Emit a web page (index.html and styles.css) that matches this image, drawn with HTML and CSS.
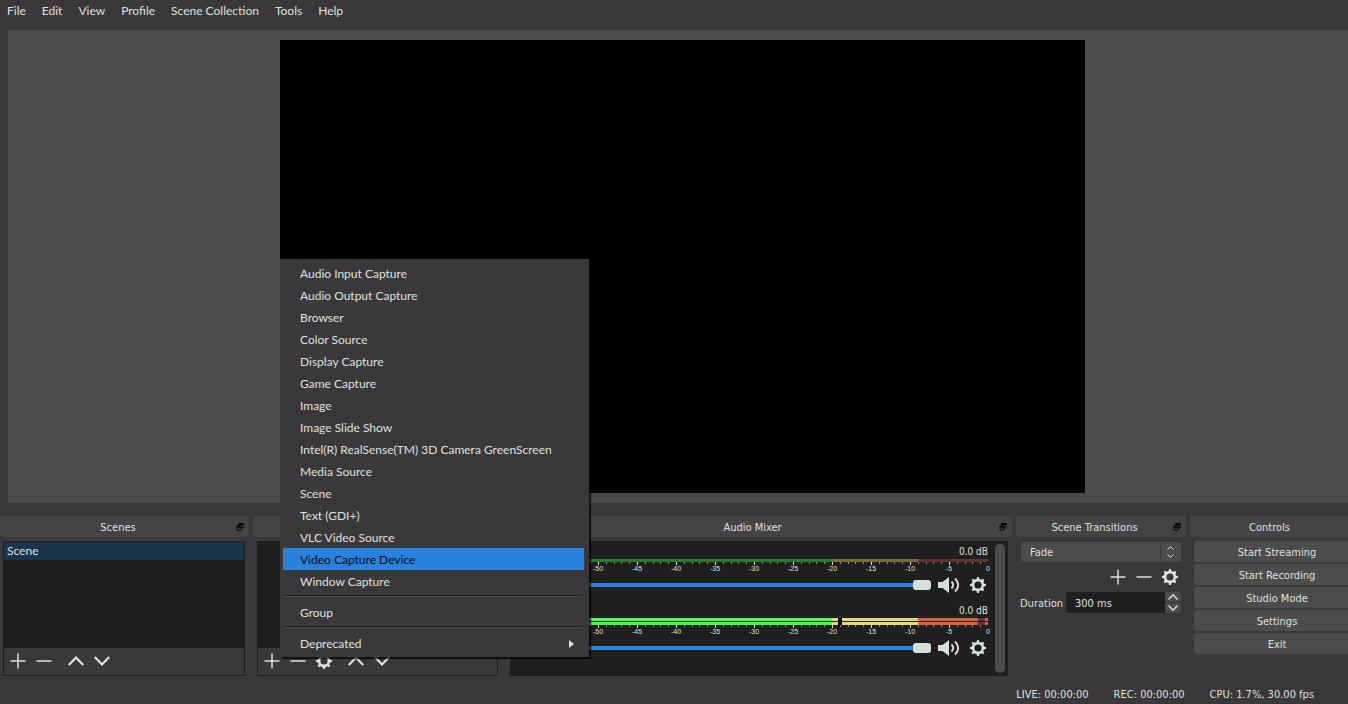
FILE: index.html
```html
<!DOCTYPE html>
<html lang="en">
<head>
<meta charset="utf-8">
<title>Studio</title>
<link rel="stylesheet" href="styles.css">
</head>
<body>
<svg class="defs" aria-hidden="true">
  <symbol id="plus" viewBox="0 0 16 16"><path d="M8 0.500V15.500M0.500 8H15.500" stroke="currentColor" stroke-width="1.500" fill="none"/></symbol>
  <symbol id="minus" viewBox="0 0 16 16"><path d="M0.500 8H15.500" stroke="currentColor" stroke-width="1.500" fill="none"/></symbol>
  <symbol id="up" viewBox="0 0 16 16"><path d="M0.800 12L8 4.500L15.200 12" stroke="currentColor" stroke-width="2.200" fill="none"/></symbol>
  <symbol id="down" viewBox="0 0 16 16"><path d="M0.800 4L8 11.500L15.200 4" stroke="currentColor" stroke-width="2.200" fill="none"/></symbol>
  <symbol id="gear" viewBox="0 0 16 16">
    <circle cx="8" cy="8" r="4.900" fill="none" stroke="currentColor" stroke-width="2.600"/>
    <path d="M6.400 2.500L7.100 0H8.900L9.600 2.500ZM6.400 13.500L7.100 16H8.900L9.600 13.500ZM2.500 6.400L0 7.100V8.900L2.500 9.600ZM13.500 6.400L16 7.100V8.900L13.500 9.600ZM2.900 5.200L1.700 2.900L2.900 1.700L5.200 2.900ZM10.800 2.900L13.100 1.700L14.300 2.900L13.100 5.200ZM2.900 10.800L1.700 13.100L2.900 14.300L5.200 13.100ZM10.800 13.100L13.100 14.300L14.300 13.100L13.100 10.800Z" fill="currentColor"/>
  </symbol>
  <symbol id="speaker" viewBox="0 0 22 16">
    <path d="M0 5H4.500L11 0V16L4.500 11H0Z" fill="currentColor"/>
    <path d="M13.500 4.500Q16.800 8 13.500 11.500M17 1.500Q23.400 8 17 14.500" stroke="currentColor" stroke-width="1.900" fill="none"/>
  </symbol>
  <symbol id="float" viewBox="0 0 8 8">
    <path d="M3 3V1H7V5H5.500M1 3.500H5V7H1Z" stroke="currentColor" fill="none"/>
    <path d="M2.500 1H7.500M0.500 3.500H5.500" stroke="currentColor" stroke-width="2"/>
  </symbol>
  <symbol id="ticks" viewBox="0 0 60 3" preserveAspectRatio="none">
    <path d="M0 1H60" stroke="#8c8c8c" stroke-width="2" stroke-dasharray="0.128 0.872"/>
    <path d="M0 1.500H60.130" stroke="#e4e4e4" stroke-width="3" stroke-dasharray="0.128 4.872"/>
  </symbol>
</svg>

<div class="app">
  <nav class="menubar">
    <button>File</button><button>Edit</button><button>View</button><button>Profile</button><button>Scene Collection</button><button>Tools</button><button>Help</button>
  </nav>

  <main class="preview"><div class="canvas"></div></main>

  <div class="docks">
    <section class="dock">
      <header class="dock-head"><h2>Scenes</h2><button class="float" aria-label="Float"><svg><use href="#float"/></svg></button></header>
      <div class="list-box">
        <ul class="list"><li class="selected">Scene</li></ul>
        <div class="toolbar">
          <button aria-label="Add"><svg><use href="#plus"/></svg></button>
          <button aria-label="Remove"><svg><use href="#minus"/></svg></button>
          <button class="apart" aria-label="Move up"><svg><use href="#up"/></svg></button>
          <button aria-label="Move down"><svg><use href="#down"/></svg></button>
        </div>
      </div>
    </section>

    <section class="dock sources">
      <header class="dock-head"></header>
      <div class="list-box">
        <ul class="list"></ul>
        <div class="toolbar">
          <button aria-label="Add"><svg><use href="#plus"/></svg></button>
          <button aria-label="Remove"><svg><use href="#minus"/></svg></button>
          <button aria-label="Properties"><svg><use href="#gear"/></svg></button>
          <button class="apart" aria-label="Move up"><svg><use href="#up"/></svg></button>
          <button aria-label="Move down"><svg><use href="#down"/></svg></button>
        </div>
      </div>
      <div class="menu" role="menu">
        <button role="menuitem">Audio Input Capture</button>
        <button role="menuitem">Audio Output Capture</button>
        <button role="menuitem">Browser</button>
        <button role="menuitem">Color Source</button>
        <button role="menuitem">Display Capture</button>
        <button role="menuitem">Game Capture</button>
        <button role="menuitem">Image</button>
        <button role="menuitem">Image Slide Show</button>
        <button role="menuitem">Intel(R) RealSense(TM) 3D Camera GreenScreen</button>
        <button role="menuitem">Media Source</button>
        <button role="menuitem">Scene</button>
        <button role="menuitem">Text (GDI+)</button>
        <button role="menuitem">VLC Video Source</button>
        <button role="menuitem" class="active">Video Capture Device</button>
        <button role="menuitem">Window Capture</button>
        <hr>
        <button role="menuitem">Group</button>
        <hr>
        <button role="menuitem" class="submenu">Deprecated<svg viewBox="0 0 5 8"><path d="M0 0L5 4L0 8Z" fill="currentColor"/></svg></button>
      </div>
    </section>

    <section class="dock">
      <header class="dock-head"><h2>Audio Mixer</h2><button class="float" aria-label="Float"><svg><use href="#float"/></svg></button></header>
      <div class="mixer">
        <div class="channels">
          <div class="channel">
            <div class="level">0.0 dB</div>
            <div class="meter idle"></div>
            <svg class="ticks"><use href="#ticks"/></svg>
            <div class="scale"><span></span><span></span><span>-50</span><span>-45</span><span>-40</span><span>-35</span><span>-30</span><span>-25</span><span>-20</span><span>-15</span><span>-10</span><span>-5</span><span>0</span></div>
            <div class="volume">
              <input type="range" min="0" max="100" value="100" aria-label="Volume">
              <button class="mute" aria-label="Mute"><svg><use href="#speaker"/></svg></button>
              <button class="gear" aria-label="Channel settings"><svg><use href="#gear"/></svg></button>
            </div>
          </div>
          <div class="channel">
            <div class="level">0.0 dB</div>
            <div class="meter live"><i></i><i></i></div>
            <svg class="ticks"><use href="#ticks"/></svg>
            <div class="scale"><span></span><span></span><span>-50</span><span>-45</span><span>-40</span><span>-35</span><span>-30</span><span>-25</span><span>-20</span><span>-15</span><span>-10</span><span>-5</span><span>0</span></div>
            <div class="volume">
              <input type="range" min="0" max="100" value="100" aria-label="Volume">
              <button class="mute" aria-label="Mute"><svg><use href="#speaker"/></svg></button>
              <button class="gear" aria-label="Channel settings"><svg><use href="#gear"/></svg></button>
            </div>
          </div>
        </div>
        <div class="scrollbar"></div>
      </div>
    </section>

    <section class="dock">
      <header class="dock-head"><h2>Scene Transitions</h2><button class="float" aria-label="Float"><svg><use href="#float"/></svg></button></header>
      <div class="transitions">
        <div class="combo">
          <select aria-label="Transition"><option>Fade</option></select>
          <svg viewBox="0 0 7 12"><path d="M0.500 3.500L3.500 0.700L6.500 3.500M0.500 8.500L3.500 11.300L6.500 8.500" stroke="currentColor" fill="none"/></svg>
        </div>
        <div class="tools">
          <button aria-label="Add"><svg><use href="#plus"/></svg></button>
          <button aria-label="Remove"><svg><use href="#minus"/></svg></button>
          <button aria-label="Properties"><svg><use href="#gear"/></svg></button>
        </div>
        <div class="duration">
          <label for="duration">Duration</label>
          <input id="duration" type="text" value="300 ms">
          <div class="spin">
            <button aria-label="Increase"><svg><use href="#up"/></svg></button>
            <button aria-label="Decrease"><svg><use href="#down"/></svg></button>
          </div>
        </div>
      </div>
    </section>

    <section class="dock">
      <header class="dock-head"><h2>Controls</h2></header>
      <div class="controls">
        <button>Start Streaming</button>
        <button>Start Recording</button>
        <button>Studio Mode</button>
        <button>Settings</button>
        <button>Exit</button>
      </div>
    </section>
  </div>

  <footer class="status"><span>LIVE: 00:00:00</span><span>REC: 00:00:00</span><span>CPU: 1.7%, 30.00 fps</span></footer>
</div>
</body>
</html>
```
FILE: styles.css
```css
* { box-sizing: border-box; }

body {
  margin: 0;
  overflow: hidden;
  background: #3a383a;
  color: #dfe1df;
  font: 11px/15px "DejaVu Sans Condensed", "DejaVu Sans", sans-serif;
}

button, input, select {
  margin: 0;
  padding: 0;
  border: 0;
  background: none;
  color: inherit;
  font: inherit;
}

svg { display: block; }
.defs { position: absolute; width: 0; height: 0; }

/* The window runs a little past the right edge of the screen. */
.app {
  display: flex;
  flex-direction: column;
  width: calc(100% + 16px);
  height: 100vh;
}

.menubar {
  display: flex;
  gap: 16px;
  height: 30px;
  padding: 3px 7px 11px;
  font: 12px/16px Lato, "Open Sans", sans-serif;
}

.preview {
  display: flex;
  flex: 1;
  justify-content: center;
  min-height: 0;
  margin: 0 7px 0 8px;
  padding: 10px;
  background: #4c4c4c;
}
.canvas { height: 100%; aspect-ratio: 16 / 9; background: #000; }

.docks {
  display: grid;
  grid-template-columns: 249fr 249fr 506fr 170fr 174fr;
  gap: 4px;
  margin-top: 13px;
}
.dock { display: flex; flex-direction: column; gap: 4px; min-width: 0; }
.dock-head {
  display: flex;
  align-items: center;
  height: 21px;
  padding-right: 15px;
  border-radius: 2px;
  background: #454346;
}
.dock-head h2 {
  flex: 1;
  margin: 0;
  padding-top: 2px;
  font-size: 11px;
  font-weight: 400;
  text-align: center;
}
.float { width: 8px; height: 8px; margin-right: -10px; color: #050505; }
.float svg { width: 8px; height: 8px; }

.list-box {
  display: flex;
  flex: 1;
  flex-direction: column;
  margin: 0 4px 0 3px;
  border: 1px solid #1f1f1f;
}
.sources .list-box { margin: 0 4px; }
.list { flex: 1; margin: 0; padding: 0; background: #1f1f1f; list-style: none; font: 12px/18px Lato, "Open Sans", sans-serif; }
.list .selected { height: 18px; padding-left: 3px; background: #19334d; }
.toolbar { display: flex; gap: 10px; height: 27px; padding: 5px 6px; }
.toolbar button, .toolbar svg, .tools button, .tools svg { width: 16px; height: 16px; }
.toolbar .apart { margin-left: 6px; }

.sources { position: relative; }
.menu {
  position: absolute;
  z-index: 1;
  bottom: 19px;
  left: 27px;
  display: flex;
  flex-direction: column;
  min-width: 309px;
  padding: 3px 5px 3px 3px;
  background: #3a383b;
  box-shadow: 2px 2px 1px #000a;
  font: 12px/20px Lato, "Open Sans", sans-serif;
  white-space: nowrap;
}
.menu button { height: 22px; padding: 2px 12px 0 17px; text-align: left; }
.menu .active { background: #2982dc; color: #050a10; }
.menu hr { width: auto; height: 2px; margin: 3px 2px 4px; border: 0; border-top: 1px solid #1b1b1b; background: #474548; }
.menu .submenu { display: flex; align-items: center; justify-content: space-between; padding-right: 10px; }
.submenu svg { width: 5px; height: 8px; }

.mixer {
  display: flex;
  flex: 1;
  gap: 7px;
  margin: 0 4px;
  padding: 3px 3px 3px 10px;
  background: #1f1f1f;
}
.channels { display: flex; flex: 1; flex-direction: column; gap: 9px; padding-bottom: 16px; }
.scrollbar { width: 10px; border-radius: 5px; background: #4c4c4c; }
.level { height: 15px; text-align: right; font-size: 10px; }
.meter { height: 7px; }
.idle { height: 3px; background: linear-gradient(90deg, #267f26 66.6%, #7b6c33 66.6% 85%, #6c2f2f 85%); }
.live { display: grid; gap: 1px; }
.live i {
  background: linear-gradient(90deg, #4cff4c 66.6%, #e2d87a 66.6% 68%, #000 68% 68.700%, #e2d87a 68.700% 85%, #dc5f3f 85% 97.800%, #6c2f2f 97.800% 99.300%, #dc5f3f 99.300%);
}
.ticks { width: 100%; height: 3px; overflow: visible; shape-rendering: crispEdges; }
.scale { display: flex; justify-content: space-between; height: 8px; font: 7px/8px "Liberation Sans", sans-serif; }
.scale span { display: flex; justify-content: center; width: 0; }
.volume { display: flex; align-items: center; height: 18px; margin-top: 3px; padding-right: 2px; }
.volume input { flex: 1; min-width: 0; height: 10px; margin-right: 7px; appearance: none; }
.volume input::-webkit-slider-runnable-track { height: 4px; border-radius: 2px; background: #2982dc; }
.volume input::-webkit-slider-thumb { width: 18px; height: 10px; margin-top: -3px; border-radius: 3px; background: #d6e0da; appearance: none; }
.mute, .mute svg { width: 22px; height: 16px; color: #d6e0da; }
.gear, .gear svg { width: 16px; height: 16px; color: #d6e0da; }
.gear { margin-left: 10px; }

.transitions { display: flex; flex-direction: column; gap: 7px; padding: 1px 5px 0 4px; }
.combo { position: relative; display: flex; height: 20px; margin-left: 1px; border-radius: 3px; background: #4c4c4c; }
.combo select { flex: 1; padding: 1px 0 0 9px; appearance: none; }
.combo svg { position: absolute; top: 4px; right: 7px; width: 7px; height: 12px; pointer-events: none; }
.combo::after { position: absolute; top: 0; right: 20px; bottom: 0; width: 1px; background: #39383a; content: ""; }
.tools { display: flex; justify-content: flex-end; gap: 10px; padding-right: 3px; }
.duration { display: flex; align-items: center; height: 21px; }
.duration label { padding-top: 2px; }
.duration input { flex: 1; min-width: 0; height: 21px; margin-left: 3px; padding: 2px 0 0 9px; border-radius: 3px 0 0 3px; background: #1f1f1f; }
.spin { display: grid; gap: 1px; width: 16px; height: 21px; }
.spin button { display: grid; place-items: center; height: 10px; border-radius: 2px; background: #4c4c4c; }
.spin svg { width: 12px; height: 10px; }

.controls { display: flex; flex-direction: column; gap: 2px; padding: 0 4px; }
.controls button { height: 21px; padding-top: 2px; border-radius: 3px; background: #4c4c4c; }

.status { display: flex; justify-content: flex-end; gap: 25px; height: 28px; padding: 11px 50px 0 0; }
```
